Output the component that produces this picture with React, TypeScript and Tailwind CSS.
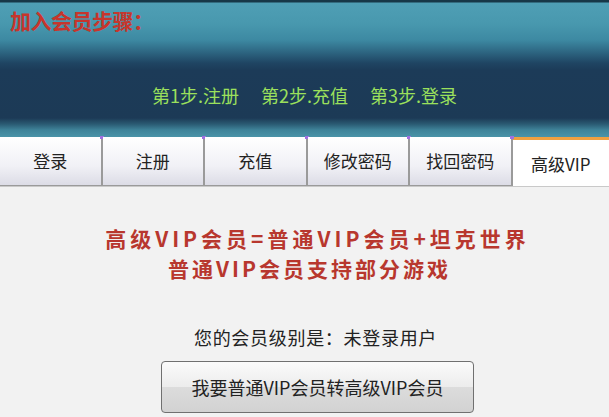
const tabs = ['登录', '注册', '充值', '修改密码', '找回密码'];

const font = { fontFamily: '"Noto Sans CJK SC", "Liberation Sans", sans-serif' };

export default function App() {
  return (
    <div className="w-[609px] h-[417px] overflow-hidden bg-[#f2f2f2] text-[#222]" style={font}>
      {/* Header banner */}
      <div className="h-[137px] flex flex-col bg-[linear-gradient(to_bottom,#173848_0px,#173848_2px,#4f9fb5_3px,#4898ae_24px,#3d89a2_40px,#2c637f_53px,#1f4563_63px,#1c3b58_70px,#1c3a56_118px,#2a5a72_124px,#3f8399_130px,#4a94a8_137px)]">
        <div className="pl-[10px] pt-[5px] text-[21px] leading-[30px] font-bold text-[#c7352c] tracking-[-0.5px]">
          加入会员步骤：
        </div>
        <div className="mt-[48px] flex justify-center gap-[22px] text-[18px] leading-[24px] text-[#9be05c]">
          <span>第1步.注册</span>
          <span>第2步.充值</span>
          <span>第3步.登录</span>
        </div>
      </div>

      {/* Tabs */}
      <div className="h-[50px] flex border-b border-[#c9c9c9]">
        {tabs.map((t) => (
          <div
            key={t}
            className="relative w-[102.5px] h-full flex items-center justify-center text-[17px] border-r-2 border-[#9a9a9a] border-b border-b-[#9a9a9a] bg-[linear-gradient(to_bottom,#ffffff,#f1f1f6_60%,#dcdce6)]"
          >
            {t}
            <span className="absolute -right-[3px] -top-[1px] w-[4px] h-[3px] bg-[#a070e0]" />
          </div>
        ))}
        <div className="flex-1 h-full flex items-center justify-center text-[17px] bg-white border-t-[3px] border-[#f0a040] pt-[2px]">
          高级VIP
        </div>
      </div>

      {/* Content */}
      <div className="flex flex-col items-center pt-[37px]">
        <div className="flex flex-col items-center gap-[1px] text-[21px] leading-[29px] font-bold text-[#b8372e]">
          <div className="tracking-[4px] pl-[26px]">高级VIP会员=普通VIP会员+坦克世界</div>
          <div className="tracking-[3px] pl-[10px]">普通VIP会员支持部分游戏</div>
        </div>
        <div className="mt-[42px] pl-[22px] text-[18px] leading-[24px] tracking-[0.7px] text-[#222]">您的会员级别是：未登录用户</div>
        <button className="mt-[12px] ml-[26px] w-[313px] h-[52px] rounded-[4px] border border-[#707070] bg-[linear-gradient(to_bottom,#fbfbfb,#ececec_50%,#dcdcdc_51%,#d2d2d2)] text-[18px] text-[#222]">
          我要普通VIP会员转高级VIP会员
        </button>
      </div>
    </div>
  );
}
